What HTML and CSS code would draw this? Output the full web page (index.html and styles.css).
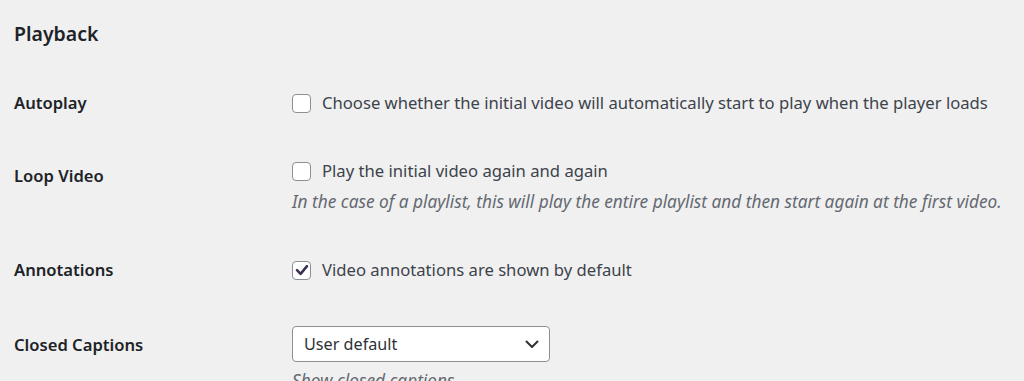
FILE: index.html
```html
<!DOCTYPE html>
<html lang="en">
<head>
<meta charset="utf-8">
<title>Playback</title>
<link rel="stylesheet" href="styles.css">
</head>
<body>
<h2 class="section-title">Playback</h2>
<div class="form">
  <div class="row">
    <div class="label">Autoplay</div>
    <div class="field">
      <label class="check-line"><span class="box"></span><span>Choose whether the initial video will automatically start to play when the player loads</span></label>
    </div>
  </div>
  <div class="row">
    <div class="label label-low">Loop Video</div>
    <div class="field">
      <label class="check-line"><span class="box"></span><span>Play the initial video again and again</span></label>
      <p class="desc">In the case of a playlist, this will play the entire playlist and then start again at the first video.</p>
    </div>
  </div>
  <div class="row">
    <div class="label">Annotations</div>
    <div class="field">
      <label class="check-line"><span class="box checked"><svg viewBox="0 0 20 20" width="20" height="20"><path d="M5 10.2 L8.6 13.8 L15 6.2" fill="none" stroke="#3e3150" stroke-width="2.6" stroke-linecap="round" stroke-linejoin="round"/></svg></span><span>Video annotations are shown by default</span></label>
    </div>
  </div>
  <div class="row">
    <div class="label label-select">Closed Captions</div>
    <div class="field">
      <div class="select"><span>User default</span><svg class="chev" viewBox="0 0 14 9" width="14" height="9"><path d="M1.5 1.5 L7 7 L12.5 1.5" fill="none" stroke="#2c3338" stroke-width="2" stroke-linecap="round" stroke-linejoin="round"/></svg></div>
      <p class="desc desc-select">Show closed captions</p>
    </div>
  </div>
</div>
</body>
</html>
```
FILE: styles.css
```css
html, body {
  margin: 0;
  padding: 0;
  background: #f0f0f1;
}
body {
  padding-left: 14px;
  font-family: "Noto Sans", "Open Sans", sans-serif;
  color: #1d2327;
  overflow: hidden;
  height: 381px;
}
.section-title {
  margin: 20px 0 0;
  font-size: 19.5px;
  line-height: 28px;
  font-weight: 600;
  color: #1d2327;
}
.form {
  display: flex;
  flex-direction: column;
  gap: 44px;
  margin-top: 43px;
}
.row {
  display: flex;
  align-items: flex-start;
}
.label {
  width: 278px;
  flex: none;
  font-size: 16.6px;
  line-height: 24px;
  font-weight: 600;
  color: #1d2327;
}
.label-low { padding-top: 5px; }
.label-select { padding-top: 7px; }
.field {
  display: flex;
  flex-direction: column;
}
.check-line {
  display: flex;
  align-items: center;
  font-size: 16.65px;
  line-height: 24px;
  color: #3c434a;
}
.box {
  width: 17px;
  height: 17px;
  border: 1.5px solid #8c8f94;
  border-radius: 4px;
  background: #fff;
  margin-right: 11px;
  flex: none;
  position: relative;
}
.box svg {
  position: absolute;
  left: -1.5px;
  top: -1.5px;
}
.desc {
  margin: 7px 0 0;
  font-size: 17.25px;
  line-height: 24px;
  font-style: italic;
  color: #646970;
}
.desc-select { margin-top: 7px; }
.select {
  width: 258px;
  height: 36px;
  box-sizing: border-box;
  border: 1px solid #8c8f94;
  border-radius: 4px;
  background: #fff;
  display: flex;
  align-items: center;
  justify-content: space-between;
  padding: 0 10px 0 11px;
  font-size: 16.2px;
  color: #2c3338;
}
.chev { flex: none; }
```
